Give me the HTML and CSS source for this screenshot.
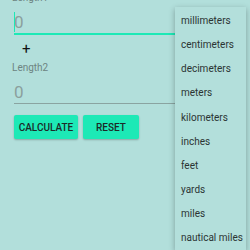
FILE: index.html
```html
<!DOCTYPE html>
<html lang="en">
<head>
    <meta charset="UTF-8">
    <meta name="viewport" content="width=device-width, initial-scale=1.0">
    <title>Length converter</title>
    <link rel="stylesheet" href="styles.css">
</head>
<body>

    <div class="form">
        <!-- First value -->
        <div class="field-label">Length1</div>
        <div class="field field-active"><span class="caret"></span><span class="value">0</span></div>

        <div class="operator">+</div>

        <!-- Second value -->
        <div class="field-label">Length2</div>
        <div class="field"><span class="value">0</span></div>

        <div class="actions">
            <button class="btn btn-calc">CALCULATE</button>
            <button class="btn btn-reset">RESET</button>
        </div>
    </div>

    <!-- Unit dropdown -->
    <ul class="menu">
        <li>millimeters</li>
        <li>centimeters</li>
        <li>decimeters</li>
        <li>meters</li>
        <li>kilometers</li>
        <li>inches</li>
        <li>feet</li>
        <li>yards</li>
        <li>miles</li>
        <li>nautical miles</li>
    </ul>

</body>
</html>
```

FILE: styles.css
```css
body {
    font-family: Roboto, 'Noto Sans', sans-serif;
    margin: 0;
    padding: 0;
    background: #b2dfdb;
    height: 250px;
    overflow: hidden;
    position: relative;
}

.form {
    margin-top: -8px;
    padding: 0 14px;
}

.field-label {
    font-size: 10px;
    line-height: 12px;
    color: #6d8482;
    margin-left: -2px;
}

.field {
    display: flex;
    align-items: center;
    position: relative;
    padding-top: 8px;
    height: 20px;
    border-bottom: 1px solid #8aa4a1;
    padding-bottom: 1px;
}

.field-active {
    border-bottom: 2px solid #1de9b6;
    padding-bottom: 1px;
}

.value {
    font-size: 17px;
    line-height: 20px;
    color: #8b9f9d;
}

.caret {
    position: absolute;
    left: 0;
    top: 8px;
    width: 1px;
    height: 20px;
    background: #1de9b6;
}

.operator {
    height: 26px;
    padding-left: 8px;
    font-size: 15px;
    line-height: 26px;
    padding-top: 1px;
    color: #111;
}

.actions {
    display: flex;
    gap: 5px;
    margin-top: 11px;
}

.btn {
    height: 24px;
    border: none;
    border-radius: 2px;
    background: #1de9b6;
    color: #1c2a28;
    font-family: Roboto, sans-serif;
    font-size: 10px;
    font-weight: 500;
    padding: 0;
    box-shadow: 0 1px 2px rgba(0, 0, 0, 0.25);
}

.btn-calc {
    width: 64px;
}

.btn-reset {
    width: 56px;
}

.menu {
    position: absolute;
    left: 175px;
    top: 7px;
    bottom: 0;
    width: 71px;
    margin: 0;
    padding: 2px 0 0;
    list-style: none;
    background: #b3dfdb;
    box-shadow: 0 2px 6px rgba(0, 0, 0, 0.3);
    overflow: hidden;
}

.menu li {
    height: 24.17px;
    line-height: 24px;
    padding-left: 6px;
    font-size: 10px;
    color: #2b3433;
    white-space: nowrap;
}
```
